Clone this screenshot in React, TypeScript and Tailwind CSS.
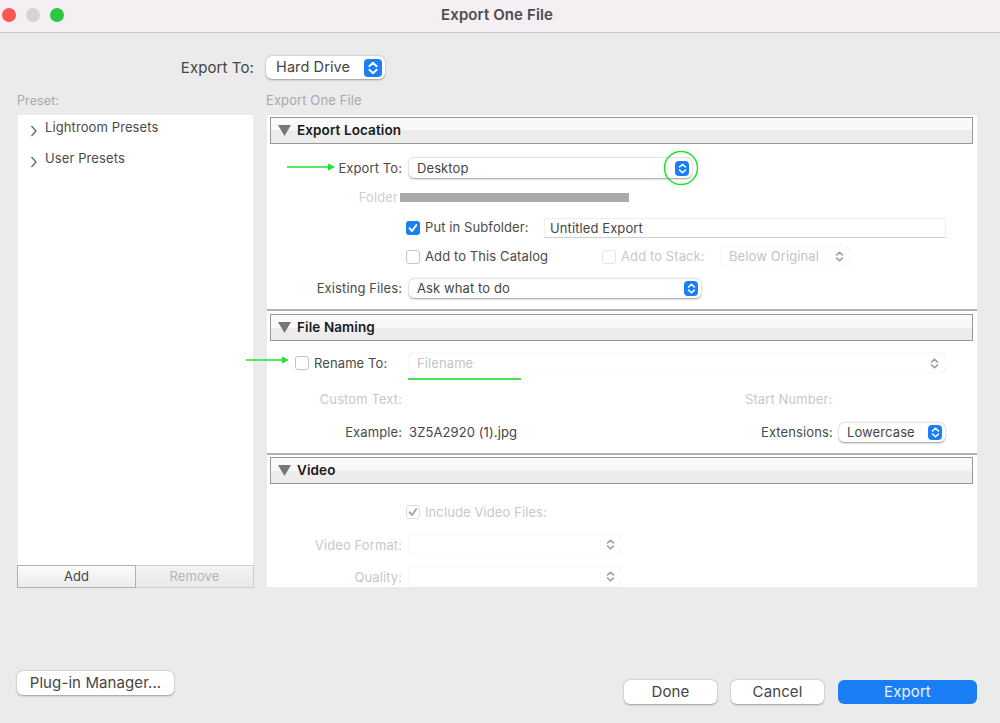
import React from "react";

const font = { fontFamily: '"Inter", "Liberation Sans", sans-serif' };

function Updown({ color = "#ffffff", size = 14 }: { color?: string; size?: number }) {
  return (
    <svg width={size} height={size} viewBox="0 0 14 14" fill="none" stroke={color} strokeWidth="1.7" strokeLinecap="round" strokeLinejoin="round">
      <path d="M3.8 5.4 7 2.4l3.200 3" />
      <path d="M3.800 8.600 7 11.600l3.200-3" />
    </svg>
  );
}

function Stepper({ big }: { big?: boolean }) {
  return (
    <span className={`${big ? "w-[18px] h-[18px]" : "w-[14px] h-[15px]"} flex items-center justify-center rounded-[4px] bg-[#1a7ef5] shrink-0`}>
      <Updown size={big ? 16 : 13} />
    </span>
  );
}

function Select({ text, w, disabled, h = "h-[20px]", low }: { text?: string; w: string; disabled?: boolean; h?: string; low?: boolean }) {
  return (
    <div className={`${w} ${h} flex items-center justify-between pl-2 pr-[3px] bg-white rounded-[5px] shrink-0 ${disabled ? "shadow-[0_0_1px_rgba(0,0,0,0.25)] text-[#c4c4c4]" : "shadow-[0_0.5px_2px_rgba(0,0,0,0.4)] text-[#454545]"}`}>
      <span className={low ? "pt-[2px]" : ""}>{text}</span>
      {disabled ? <span className="pr-[1px]"><Updown color="#9a9a9a" size={13} /></span> : <Stepper />}
    </div>
  );
}

function Check({ state }: { state: "on" | "off" | "dis" | "dison" }) {
  if (state === "on")
    return (
      <span className="w-[14px] h-[14px] rounded-[3px] bg-[#1a7ef5] flex items-center justify-center shrink-0">
        <svg width="12" height="12" viewBox="0 0 12 12" fill="none" stroke="#fff" strokeWidth="2" strokeLinecap="round" strokeLinejoin="round"><path d="M2.6 6.4 5 9l4.4-6" /></svg>
      </span>
    );
  if (state === "dison")
    return (
      <span className="w-[14px] h-[14px] rounded-[3px] bg-white border border-[#dedede] flex items-center justify-center shrink-0">
        <svg width="12" height="12" viewBox="0 0 12 12" fill="none" stroke="#a8a8a8" strokeWidth="2" strokeLinecap="round" strokeLinejoin="round"><path d="M2.6 6.4 5 9l4.4-6" /></svg>
      </span>
    );
  return <span className={`flex w-[14px] h-[14px] rounded-[3px] bg-white border shrink-0 ${state === "dis" ? "border-[#e4e4e4]" : "border-[#c4c4c4]"}`} />;
}

function Header({ title, cls }: { title: string; cls: string }) {
  return (
    <div className={`${cls} ml-[3px] mr-[4px] h-[27px] flex items-center border-[1.5px] border-[#979797] bg-[linear-gradient(#fafafa_0%,#f8f8f8_50%,#ececec_50%,#ececec_100%)]`}>
      <svg width="13" height="11" viewBox="0 0 13 11" className="ml-[7px] mr-[6px]"><path d="M0 0h13L6.5 11z" fill="#767676" /></svg>
      <span className="text-[13.5px] font-semibold text-[#1a1a1a]">{title}</span>
    </div>
  );
}

function Label({ children, muted, low }: { children: React.ReactNode; muted?: boolean; low?: boolean }) {
  return <span className={`w-[135px] mr-[7px] text-right shrink-0 ${low ? "pt-[2px]" : ""} ${muted ? "text-[#c8c8c8]" : "text-[#4a4a4a]"}`}>{children}</span>;
}

function Arrow({ cls, w }: { cls: string; w: number }) {
  return (
    <svg width={w} height="8" viewBox={`0 0 ${w} 8`} className={`absolute ${cls}`}>
      <path d={`M0 4h${w - 6}`} stroke="#22e02c" strokeWidth="1.5" />
      <path d={`M${w - 7} 0.5 ${w} 4l-7 3.5z`} fill="#22e02c" />
    </svg>
  );
}

function Button({ children, cls }: { children: React.ReactNode; cls: string }) {
  return <div className={`h-[24px] flex items-center justify-center rounded-[6px] text-[15px] ${cls}`}>{children}</div>;
}

export default function App() {
  return (
    <div style={font} className="w-[1000px] h-[723px] overflow-hidden bg-[#ebebeb] text-[13px] tracking-[0.1px] text-[#454545]">
      <div className="h-[33px] flex items-center relative bg-[#f3eff3] border-b border-[#c9c9c9]">
        <div className="flex items-center gap-[10px] pl-[2px] pb-[2px]">
          <span className="w-[14px] h-[14px] rounded-full bg-[#fc5753]" />
          <span className="w-[14px] h-[14px] rounded-full bg-[#d6d2d6]" />
          <span className="w-[14px] h-[14px] rounded-full bg-[#2dc840]" />
        </div>
        <span className="absolute left-0 right-[6px] top-[4px] text-center text-[15px] font-semibold text-[#4d4d4d]">Export One File</span>
      </div>

      <div className="mt-[23px] h-[23px] flex items-center">
        <span className="w-[254px] text-right text-[15px] text-[#454545] pt-[1px]">Export To:</span>
        <div className="ml-[12px] w-[119px] h-[23px] flex items-center justify-between pl-[10px] pr-[3px] bg-white rounded-[6px] shadow-[0_0.5px_2px_rgba(0,0,0,0.35)] text-[14.5px]">
          <span className="pb-[2px]">Hard Drive</span>
          <Stepper big />
        </div>
      </div>

      <div className="flex pl-[17px] mt-[14px]">
        <div className="w-[237px] shrink-0">
          <div className="h-[16px] flex items-center text-[12.5px] text-[#a9a9a9]">Preset:</div>
          <div className="mt-[6px] h-[450px] mx-[1px] bg-white pt-[4px]">
            {["Lightroom Presets", "User Presets"].map((t) => (
              <div key={t} className="h-[31px] flex items-start text-[#4a4a4a]">
                <svg width="8" height="12" viewBox="0 0 8 12" fill="none" stroke="#666" strokeWidth="1.3" className="ml-[12px] mr-[7px] mt-[6px]"><path d="M1.5 1 6 6l-4.500 5" /></svg>
                <span className="leading-[16px]">{t}</span>
              </div>
            ))}
          </div>
          <div className="h-[23px] flex">
            <div className="w-[119px] flex items-center justify-center border-[1.5px] border-[#b0b0b0] bg-[linear-gradient(#fbfbfb,#ececec)] text-[#454545]">Add</div>
            <div className="flex-1 flex items-center justify-center border border-l-0 border-[#cfcfcf] bg-[linear-gradient(#f3f3f3,#e9e9e9)] text-[#b4b4b4]">Remove</div>
          </div>
        </div>

        <div className="ml-[12px] w-[711px] shrink-0">
          <div className="h-[16px] flex items-center text-[#a9a9a9]">Export One File</div>
          <div className="mt-[6px] ml-[1px] h-[472px] bg-white pt-[2px] relative">
            <Header title="Export Location" cls="mt-0" />

            <div className="relative mt-[14px] h-[20px] flex items-center">
              <Arrow cls="left-[20px] top-[5px]" w={48} />
              <Label low>Export To:</Label>
              <Select text="Desktop" w="w-[283px]" low />
              <svg width="36" height="36" viewBox="0 0 36 36" className="absolute left-[396px] top-[-8px]" fill="none"><circle cx="18" cy="18" r="16.500" stroke="#22e02c" strokeWidth="1.500" /></svg>
            </div>

            <div className="mt-[10px] h-[18px] flex items-center">
              <span className="w-[131px] pt-[2px] text-right text-[#cfcfcf] shrink-0">Folder</span>
              <span className="ml-[2px] w-[229px] h-[9px] bg-[#aaaaaa]" />
            </div>

            <div className="mt-[12px] h-[20px] flex items-center pl-[139px]">
              <Check state="on" />
              <span className="ml-[5px] w-[119px] shrink-0 text-[#4a4a4a]">Put in Subfolder:</span>
              <div className="w-[402px] h-[20px] pl-[5px] pt-[1px] flex items-center bg-white border border-[#efefef] border-b-[#cfcfcf] text-[#454545]">Untitled Export</div>
            </div>

            <div className="mt-[9px] h-[19px] flex items-center pl-[139px]">
              <Check state="off" />
              <span className="ml-[5px] w-[177px] shrink-0 text-[#4a4a4a]">Add to This Catalog</span>
              <Check state="dis" />
              <span className="ml-[5px] w-[100px] shrink-0 text-[#c8c8c8]">Add to Stack:</span>
              <Select text="Below Original" w="w-[129px]" h="h-[19px]" disabled />
            </div>

            <div className="mt-[13px] h-[19px] flex items-center">
              <Label>Existing Files:</Label>
              <Select text="Ask what to do" w="w-[292px]" h="h-[19px]" />
            </div>

            <div className="mt-[11px] h-[2px] bg-[#b0b0b0]" />
            <Header title="File Naming" cls="mt-[3px]" />

            <div className="relative mt-[12px] h-[20px] flex items-center">
              <Arrow cls="left-[-21px] top-[3px]" w={43} />
              <span className="ml-[28px] flex shrink-0"><Check state="off" /></span>
              <span className="ml-[5px] w-[95px] pt-[2px] shrink-0 text-[#4a4a4a]">Rename To:</span>
              <Select text="Filename" w="w-[536px]" disabled low />
              <span className="absolute left-[141px] top-[25px] w-[113px] h-[2px] bg-[#4be04f]" />
            </div>

            <div className="mt-[17px] h-[18px] flex items-center">
              <Label muted low>Custom Text:</Label>
              <span className="ml-[336px] pt-[2px] text-[#c8c8c8]">Start Number:</span>
            </div>

            <div className="mt-[15px] h-[19px] flex items-center">
              <Label>Example:</Label>
              <span className="w-[352px] shrink-0 text-[#454545]">3Z5A2920 (1).jpg</span>
              <span className="w-[71px] shrink-0 text-right text-[#4a4a4a]">Extensions:</span>
              <span className="ml-[7px] flex"><Select text="Lowercase" w="w-[106px]" h="h-[19px]" /></span>
            </div>

            <div className="mt-[11px] h-[2px] bg-[#b0b0b0]" />
            <Header title="Video" cls="mt-[2px]" />

            <div className="mt-[19px] h-[18px] flex items-center pl-[139px]">
              <Check state="dison" />
              <span className="ml-[5px] pt-[2px] text-[#c8c8c8]">Include Video Files:</span>
            </div>

            <div className="mt-[14px] h-[19px] flex items-center">
              <Label muted low>Video Format:</Label>
              <Select w="w-[212px]" h="h-[19px]" disabled />
            </div>

            <div className="mt-[13px] h-[19px] flex items-center">
              <Label muted low>Quality:</Label>
              <Select w="w-[212px]" h="h-[19px]" disabled />
            </div>
          </div>
        </div>
      </div>

      <div className="flex justify-between pl-[17px] pr-[23px]">
        <Button cls="mt-[83px] w-[157px] bg-white shadow-[0_0.5px_2px_rgba(0,0,0,0.35)] text-[#454545]">Plug-in Manager...</Button>
        <div className="mt-[92px] flex gap-[14px]">
          <Button cls="w-[93px] bg-white shadow-[0_0.5px_2px_rgba(0,0,0,0.35)] text-[#454545]">Done</Button>
          <Button cls="w-[93px] bg-white shadow-[0_0.5px_2px_rgba(0,0,0,0.35)] text-[#454545]">Cancel</Button>
          <Button cls="w-[139px] bg-[#1a7ef5] text-[#eaf3ff]">Export</Button>
        </div>
      </div>
    </div>
  );
}
